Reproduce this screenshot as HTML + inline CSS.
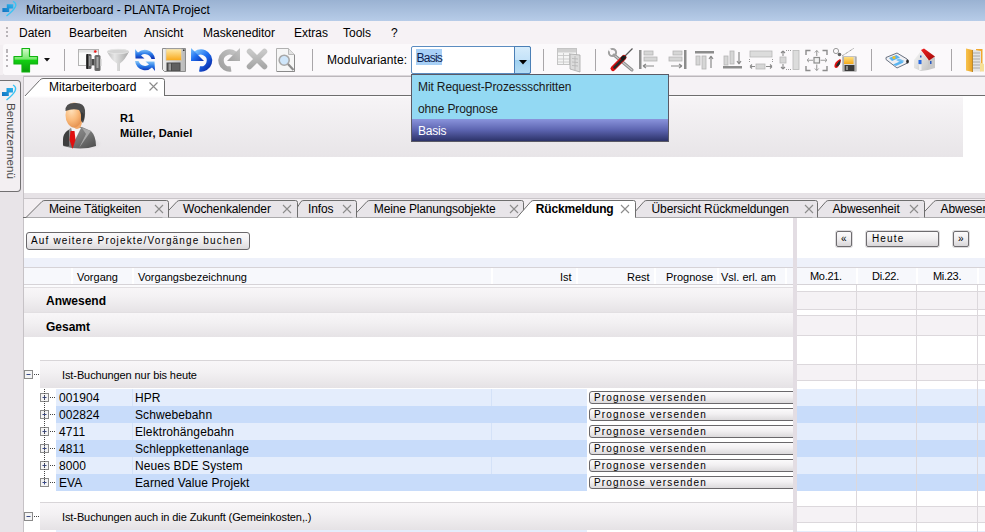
<!DOCTYPE html>
<html><head><meta charset="utf-8">
<style>
*{box-sizing:border-box;margin:0;padding:0}
html,body{width:985px;height:532px;overflow:hidden;background:#f3eff2;font-family:"Liberation Sans",sans-serif;color:#000}
.a{position:absolute}
#title{left:0;top:0;width:985px;height:21px;background:linear-gradient(#9ab2d2,#b7cce8)}
#title .t{left:26px;top:3px;font-size:12px;color:#000;white-space:nowrap}
#menu{left:0;top:21px;width:985px;height:24px;background:#f6f2f5}
#menu span{position:absolute;top:5px;font-size:12px}
#tb{left:0;top:45px;width:985px;height:31px;background:#f4f0f3}
#tbbg{left:3px;top:44px;width:990px;height:32px;background:#fbf9fb;border-radius:3px 0 0 3px;border-bottom:1px solid #dcd8dc}
.sep{position:absolute;width:1px;background:#a9a6a9}
.grip{position:absolute;width:2px;height:2px;background:#b8b4b8}
#strip{left:0;top:75px;width:23px;height:457px;background:#e8e4e8}
#side{left:0px;top:80px;width:21px;height:112px;border:1px solid #727072;border-left:none;border-radius:0 4px 4px 0;background:#f3eff2}
#main{left:23px;top:76px;width:962px;height:456px;background:#f5f2f5;border-left:1px solid #c6c2c6}
.vt{position:absolute;left:4.5px;top:22px;writing-mode:vertical-rl;font-size:11.7px;color:#4a4a4a;white-space:nowrap}
.tl{top:202px;font-size:12px;letter-spacing:-0.15px;white-space:nowrap}
.btn{border:1px solid #6a686b;border-radius:3px;background:linear-gradient(#fbfafb 0%,#f2f0f2 45%,#dcdadc 100%);overflow:hidden}
.btn span,.cbtn span{position:absolute;font-size:10px;letter-spacing:1.15px;white-space:nowrap;color:#000}
.cbtn{box-shadow:0 0 0 1px #dedcde;border:1px solid #6e6c6f;border-radius:2px;background:linear-gradient(#fbfafb 0%,#f0eef0 50%,#d8d6d8 100%)}
.hd{top:271px;font-size:11px;white-space:nowrap;color:#000}
.bd{font-size:12px;font-weight:bold;white-space:nowrap}
.gt{font-size:11px;letter-spacing:-0.1px;white-space:nowrap}
.dt{font-size:12px;letter-spacing:0.1px;white-space:nowrap}
.grow{background:linear-gradient(#e2dfe2 0px,#e2dfe2 1px,#f8f6f8 1px,#f3f1f3 40%,#e6e3e6 100%)}
.grp{border-top:1px solid #d8d5d8;background:linear-gradient(#f8f6f8,#f3f1f3 40%,#e5e2e5)}
.rd{background:#e4edfc}
.rs{background:#c8dcfa}
</style></head><body>
<div id="title" class="a">
 <svg class="a" style="left:0px;top:0px" width="20" height="20" viewBox="0 0 20 20"><defs><linearGradient id="lg" x1="0" y1="1" x2="1" y2="0"><stop offset="0" stop-color="#1070c0"/><stop offset="1" stop-color="#2cb8f0"/></linearGradient></defs><path d="M2.4 8.1H6.8V4.3H13.3V8.5H9.2V12H2.4z" fill="url(#lg)"/><path d="M13 1.3Q21 5 6.5 16" stroke="#3ac4f4" stroke-width="1.4" fill="none"/></svg>
 <div class="a t">Mitarbeiterboard - PLANTA Project</div>
</div>
<div id="menu" class="a">
 <div class="grip" style="left:6px;top:6px"></div><div class="grip" style="left:6px;top:10px"></div><div class="grip" style="left:6px;top:14px"></div>
 <span style="left:19px">Daten</span>
 <span style="left:69px">Bearbeiten</span>
 <span style="left:144px">Ansicht</span>
 <span style="left:203px">Maskeneditor</span>
 <span style="left:294px">Extras</span>
 <span style="left:343px">Tools</span>
 <span style="left:391px">?</span>
</div>
<div id="tbbg" class="a"></div>
<div id="tb" class="a" style="background:transparent">
 <div class="grip" style="left:6px;top:4px"></div><div class="grip" style="left:6px;top:6px"></div><div class="grip" style="left:6px;top:10px"></div><div class="grip" style="left:6px;top:14px"></div><div class="grip" style="left:6px;top:20px"></div>
 <!-- plus -->
 <svg class="a" style="left:13px;top:2px" width="26" height="26" viewBox="0 0 26 26"><defs><linearGradient id="gp" x1="0" y1="0" x2="0" y2="1"><stop offset="0" stop-color="#d8fad0"/><stop offset=".45" stop-color="#74e86a"/><stop offset=".5" stop-color="#12d012"/><stop offset="1" stop-color="#0a9a0a"/></linearGradient></defs><path d="M9 1.5h7.5v8h8v7.5h-8v8h-7.5v-8h-8v-7.5h8z" fill="url(#gp)" stroke="#10b410" stroke-width="1.2" stroke-linejoin="round"/></svg>
 <svg class="a" style="left:44px;top:13px" width="6" height="4" viewBox="0 0 6 4"><path d="M0 0h6l-3 3.5z" fill="#111"/></svg>
 <div class="sep" style="left:64px;top:4px;height:22px"></div>
 <!-- binoculars window -->
 <svg class="a" style="left:77px;top:3px" width="25" height="24" viewBox="0 0 25 24"><rect x="1.5" y="1.5" width="20" height="16" fill="#fbfbfb" stroke="#b4b4b4"/><rect x="2" y="2" width="19" height="2.5" fill="#e4e4e4"/><rect x="16" y="2" width="3" height="3" fill="#d8d8d8"/><circle cx="18.3" cy="3.5" r="1.3" fill="#f01818"/><rect x="9" y="6" width="5.5" height="15" rx="1.5" fill="#5c5c5c"/><rect x="9.5" y="6" width="1.5" height="15" fill="#1e1e1e"/><rect x="12" y="8" width="1.5" height="10" fill="#9a9a9a"/><rect x="17.5" y="7" width="6" height="16" rx="1.5" fill="#6a6a6a"/><rect x="19.5" y="9" width="2" height="11" fill="#a8a8a8"/><rect x="14.5" y="11" width="3" height="6" fill="#4a4a4a"/><rect x="23" y="11" width="1.5" height="7" fill="#c8c8c8"/></svg>
 <!-- funnel -->
 <svg class="a" style="left:106px;top:3px" width="24" height="24" viewBox="0 0 24 24"><defs><linearGradient id="gf" x1="0" x2="1"><stop offset="0" stop-color="#bcbcbc"/><stop offset=".35" stop-color="#e6e6e6"/><stop offset=".7" stop-color="#c4c4c4"/><stop offset="1" stop-color="#a4a4a4"/></linearGradient></defs><path d="M1 3.5Q2 1 12 1Q22 1 23 3.5Q19 12 14 15.5V23H11V15.5Q5 12 1 3.5z" fill="url(#gf)"/><ellipse cx="12" cy="3.5" rx="10.5" ry="2.2" fill="#d4d4d4" stroke="#e8e8e8" stroke-width=".8"/><rect x="11.5" y="15" width="1" height="8" fill="#d8d8d8"/></svg>
 <!-- refresh -->
 <svg class="a" style="left:134px;top:3px" width="22" height="24" viewBox="0 0 22 24"><defs><linearGradient id="gr" x1="0" y1="0" x2="0" y2="1"><stop offset="0" stop-color="#8ccaf8"/><stop offset=".5" stop-color="#2a7ae8"/><stop offset="1" stop-color="#0a2cb0"/></linearGradient></defs><path d="M1 1L1.5 10.5H10.5L7 7.5Q9 5.8 12 6.2Q16 7 17.5 11H21Q20 4 13 2Q7.5 1 4 4.5z" fill="url(#gr)"/><path d="M21 23L20.5 13.5H11.5L15 16.5Q13 18.2 10 17.8Q6 17 4.5 13H1Q2 20 9 22Q14.5 23 18 19.5z" fill="url(#gr)"/></svg>
 <!-- save -->
 <svg class="a" style="left:160px;top:0px" width="28" height="30" viewBox="160 45 28 30"><defs><linearGradient id="gs" x1="0" y1="0" x2="0" y2="1"><stop offset="0" stop-color="#ffeaa8"/><stop offset="1" stop-color="#f8a818"/></linearGradient><linearGradient id="gsf" x1="0" y1="0" x2="1" y2="0"><stop offset="0" stop-color="#f0f0f0"/><stop offset="1" stop-color="#b8b8b8"/></linearGradient></defs><path d="M162.5 48.5H185.5V71.5H164.5L162.5 69.5z" fill="url(#gsf)" stroke="#8c8c8c"/><rect x="166" y="49" width="15.5" height="11.5" fill="url(#gs)" stroke="#c8c8c8" stroke-width=".6"/><rect x="183" y="49.5" width="1.5" height="1.5" fill="#333"/><rect x="166.5" y="62.5" width="14" height="8.5" fill="#4a4a4a"/><rect x="168.5" y="63.5" width="2.5" height="7" fill="#9a9a9a"/><rect x="172" y="63.5" width="7.5" height="7" fill="#606060"/></svg>
 <!-- undo -->
 <svg class="a" style="left:186px;top:0px" width="30" height="30" viewBox="186 45 30 30"><defs><linearGradient id="gu" x1="0" y1="0" x2="1" y2="1"><stop offset="0" stop-color="#7cc4fc"/><stop offset=".5" stop-color="#1e6ef0"/><stop offset="1" stop-color="#0a2aa8"/></linearGradient></defs><path d="M193.6 56.25A8.5 8.5 0 1 1 199.5 68.9" stroke="url(#gu)" stroke-width="5.5" fill="none"/><path d="M191 48L191 61H204z" fill="url(#gu)"/></svg>
 <!-- redo -->
 <svg class="a" style="left:214px;top:0px" width="30" height="30" viewBox="214 45 30 30"><defs><linearGradient id="gd" x1="1" y1="0" x2="0" y2="1"><stop offset="0" stop-color="#c4c4c4"/><stop offset="1" stop-color="#a0a0a0"/></linearGradient></defs><path d="M236.9 56.25A8.5 8.5 0 1 0 231 68.9" stroke="url(#gd)" stroke-width="5.5" fill="none"/><path d="M240 48L240 61H227z" fill="url(#gd)"/></svg>
 <!-- x -->
 <svg class="a" style="left:244px;top:0px" width="26" height="30" viewBox="244 45 26 30"><defs><linearGradient id="gx" x1="0" y1="0" x2="0" y2="1"><stop offset="0" stop-color="#c8c8c8"/><stop offset="1" stop-color="#a8a8a8"/></linearGradient></defs><path d="M249.5 51.5L264.5 66.5M264.5 51.5L249.5 66.5" stroke="url(#gx)" stroke-width="5.5" stroke-linecap="round"/></svg>
 <!-- preview -->
 <svg class="a" style="left:275px;top:0px" width="22" height="30" viewBox="275 45 22 30"><path d="M276.5 48.5H288.5L294.5 54.5V71.5H276.5z" fill="#f6f6f6" stroke="#b0b0b0"/><path d="M288.5 48.5V54.5H294.5" fill="#e2e2e2" stroke="#b8b8b8"/><path d="M294.5 55V71.5H277" stroke="#8a8a8a" stroke-width="1" fill="none"/><path d="M287.5 63.5L293.5 70" stroke="#8c8c8c" stroke-width="2.2"/><circle cx="284.2" cy="60.2" r="5" fill="#cfe6fa" stroke="#a8a8a8" stroke-width="1.6"/></svg>
 <div class="sep" style="left:312px;top:4px;height:22px"></div>
 <span class="a" style="left:327px;top:8px;font-size:12px;letter-spacing:0.1px">Modulvariante:</span>
 <div class="a" style="left:411px;top:1px;width:120px;height:28px;border:1px solid #5b8cc0;border-radius:2px;background:#fff"></div>
 <div class="a" style="left:416px;top:4px;width:26px;height:16px;background:#a8d0f6"></div>
 <span class="a" style="left:416.5px;top:6px;font-size:12px;letter-spacing:-0.75px;color:#0c1e50">Basis</span>
 <div class="a" style="left:514px;top:1px;width:17px;height:28px;border:1px solid #4a7fb6;border-radius:0 2px 2px 0;background:linear-gradient(#d6ecfb 0%,#c4e2f8 50%,#9fd0f0 51%,#b4dcf4 100%)"></div>
 <svg class="a" style="left:519px;top:15px" width="8" height="5" viewBox="0 0 8 5"><path d="M0 0h8l-4 4.5z" fill="#000"/></svg>
 <div class="sep" style="left:543px;top:4px;height:22px"></div>
 <!-- grid doc -->
 <svg class="a" style="left:552px;top:0px" width="32" height="30" viewBox="552 45 32 30"><rect x="557.5" y="48.5" width="19" height="16" fill="#f4f4f4" stroke="#c4c4c4"/><rect x="558" y="49" width="18" height="3.5" fill="#d0d0d0"/><path d="M558 55.5H576M558 59H576M558 62H576M563.5 53V64M569.5 53V64" stroke="#c8c8c8" stroke-width=".9"/><path d="M570 54L580 55V72L570 69z" fill="#dcdcdc" stroke="#a8a8a8" stroke-width=".8"/><path d="M572 58.5L578 59M572 62L578 62.5M572 65.5L578 66M575 56V70" stroke="#b4b4b4" stroke-width=".8"/></svg>
 <div class="sep" style="left:595px;top:4px;height:22px"></div>
 <!-- tools -->
 <svg class="a" style="left:606px;top:0px" width="30" height="30" viewBox="606 45 30 30"><path d="M614 55L632 70" stroke="#8a8a8a" stroke-width="3" stroke-linecap="round"/><path d="M614 55L632 70" stroke="#c8c8c8" stroke-width="1.2" stroke-linecap="round"/><circle cx="612.5" cy="52.5" r="3.6" fill="none" stroke="#a0a0a0" stroke-width="2"/><path d="M609 49L612 52.5" stroke="#f8f6f8" stroke-width="2.5"/><path d="M632.5 48.5L623 58" stroke="#5a5a5a" stroke-width="1.3"/><path d="M624 57.5L613 68.5" stroke="#d81010" stroke-width="5" stroke-linecap="round"/><path d="M625 57L614.5 67.5" stroke="#2a2a2a" stroke-width="2.6" stroke-linecap="round"/><rect x="621" y="56" width="4" height="4" transform="rotate(45 623 58)" fill="#1a1a1a"/></svg>
 <!-- align left -->
 <svg class="a" style="left:639px;top:5px" width="20" height="20" viewBox="0 0 20 20"><rect x="0" y="0" width="2.5" height="19" fill="#8c8c8c"/><rect x="5" y="1" width="9" height="4" fill="#d6d6d6" stroke="#b4b4b4" stroke-width=".8"/><rect x="5" y="7" width="13" height="4" fill="#d6d6d6" stroke="#b4b4b4" stroke-width=".8"/><path d="M4 16H15M4 16L7 14M4 16L7 18" stroke="#8a8a8a" stroke-width="1.2" fill="none"/></svg>
 <!-- align right -->
 <svg class="a" style="left:667px;top:5px" width="20" height="20" viewBox="0 0 20 20"><rect x="17" y="0" width="2.5" height="19" fill="#8c8c8c"/><rect x="6" y="1" width="9" height="4" fill="#d6d6d6" stroke="#b4b4b4" stroke-width=".8"/><rect x="2" y="7" width="13" height="4" fill="#d6d6d6" stroke="#b4b4b4" stroke-width=".8"/><path d="M4 16H15M15 16L12 14M15 16L12 18" stroke="#8a8a8a" stroke-width="1.2" fill="none"/></svg>
 <!-- align top -->
 <svg class="a" style="left:695px;top:5px" width="20" height="20" viewBox="0 0 20 20"><rect x="0" y="1" width="19" height="2.5" fill="#8c8c8c"/><rect x="1" y="6" width="4" height="9" fill="#d6d6d6" stroke="#b4b4b4" stroke-width=".8"/><rect x="7" y="6" width="4" height="13" fill="#d6d6d6" stroke="#b4b4b4" stroke-width=".8"/><path d="M16 18V6M16 6L14 9M16 6L18 9" stroke="#8a8a8a" stroke-width="1.2" fill="none"/></svg>
 <!-- align bottom -->
 <svg class="a" style="left:723px;top:5px" width="20" height="20" viewBox="0 0 20 20"><rect x="0" y="16" width="19" height="2.5" fill="#8c8c8c"/><rect x="1" y="6" width="4" height="9" fill="#d6d6d6" stroke="#b4b4b4" stroke-width=".8"/><rect x="7" y="1" width="4" height="13" fill="#d6d6d6" stroke="#b4b4b4" stroke-width=".8"/><path d="M16 2V14M16 14L14 11M16 14L18 11" stroke="#8a8a8a" stroke-width="1.2" fill="none"/></svg>
 <!-- same width -->
 <svg class="a" style="left:749px;top:5px" width="25" height="20" viewBox="0 0 25 20"><rect x="1" y="1" width="22" height="6" fill="#dcdcdc" stroke="#b8b8b8" stroke-width=".8"/><path d="M0.5 9V13M23.5 9V13" stroke="#9a9a9a" stroke-dasharray="1 1"/><rect x="7" y="14" width="9" height="5" fill="#d6d6d6" stroke="#b8b8b8" stroke-width=".8"/><path d="M1 16.5H6M17 16.5H23M1 16.5L3 14.5M1 16.5L3 18.5M23 16.5L21 14.5M23 16.5L21 18.5" stroke="#8a8a8a" stroke-width="1.1" fill="none"/></svg>
 <!-- same height -->
 <svg class="a" style="left:779px;top:5px" width="21" height="20" viewBox="0 0 21 20"><rect x="14" y="0.5" width="6" height="19" fill="#dcdcdc" stroke="#b8b8b8" stroke-width=".8"/><rect x="1" y="7" width="6" height="6" fill="#d6d6d6" stroke="#b8b8b8" stroke-width=".8"/><path d="M4 1V6M4 14V19M4 1L2 3M4 1L6 3M4 19L2 17M4 19L6 17" stroke="#8a8a8a" stroke-width="1.1" fill="none"/><path d="M7 0.5H12M7 19.5H12" stroke="#9a9a9a" stroke-dasharray="1 1"/></svg>
 <!-- center -->
 <svg class="a" style="left:805px;top:4px" width="25" height="24" viewBox="0 0 25 24"><path d="M1 6V1.5H5.5M17.5 1.5H22V6M1 17V21.5H5.5M17.5 21.5H22V17" stroke="#8c8c8c" stroke-width="1.4" fill="none"/><rect x="9" y="8.5" width="5.5" height="5.5" fill="#f0f0f0" stroke="#8c8c8c" stroke-width="1.2"/><path d="M11.75 1.5V7M11.75 15.5V21.5M2 11.25H8M15.5 11.25H22" stroke="#9a9a9a" stroke-width="1.1"/><path d="M9.8 3.5L11.75 1.5L13.7 3.5M9.8 19.5L11.75 21.5L13.7 19.5M4 9.3L2 11.25L4 13.2M20 9.3L22 11.25L20 13.2" stroke="#9a9a9a" stroke-width="1" fill="none"/></svg>
 <!-- save paint -->
 <svg class="a" style="left:830px;top:0px" width="30" height="30" viewBox="830 45 30 30"><circle cx="836" cy="51" r="2.6" fill="none" stroke="#9a9a9a" stroke-width="1"/><circle cx="839.5" cy="54.5" r="1.8" fill="#606060"/><path d="M842 56L853.5 48.5" stroke="#8a8a8a" stroke-width="1" stroke-dasharray="1 .6"/><path d="M840 59Q834 62 834.5 67Q836 69 838 67Q841 63 841 60z" fill="#e01010"/><path d="M840.5 60Q836.5 63 836 66.5Q838 67 840 64z" fill="#1e2a2a"/><rect x="842.5" y="56.5" width="14" height="15" fill="#8c8c8c"/><rect x="843.5" y="57" width="12" height="14" fill="#d4d4d4"/><defs><linearGradient id="gsp" x1="0" y1="0" x2="0" y2="1"><stop offset="0" stop-color="#ffe080"/><stop offset="1" stop-color="#f4a818"/></linearGradient></defs><rect x="844" y="57" width="9.5" height="7" fill="url(#gsp)"/><rect x="844.5" y="65" width="10" height="6" fill="#3a3a3a"/><rect x="846" y="66" width="2" height="4" fill="#8a8a8a"/></svg>
 <div class="sep" style="left:871px;top:4px;height:22px"></div>
 <!-- map -->
 <svg class="a" style="left:882px;top:0px" width="30" height="30" viewBox="882 45 30 30"><path d="M886 57.5L897 53L907 59Q909 61 907.5 63L897 68L886 59.5z" fill="#f0f0f4" stroke="#5a6474" stroke-width=".9" stroke-linejoin="round"/><path d="M889 58L896.5 55L900 57.5L892 61z" fill="#5ab4f0"/><path d="M899 58.5L904.5 61L901 62.8L896 60z" fill="#78c0f0"/><path d="M893 64.5L901 61L903.5 62.5L896 66z" fill="#5ab4f0"/><circle cx="894" cy="57.5" r="1.6" fill="#f4c020"/><ellipse cx="907.5" cy="61.5" rx="1.3" ry="2" fill="#2a2a2a"/></svg>
 <!-- house -->
 <svg class="a" style="left:912px;top:0px" width="26" height="30" viewBox="912 45 26 30"><defs><linearGradient id="gh" x1="0" y1="0" x2="1" y2="1"><stop offset="0" stop-color="#f8f8f8"/><stop offset="1" stop-color="#c4c4c4"/></linearGradient><linearGradient id="groof" x1="0" y1="0" x2="1" y2="1"><stop offset="0" stop-color="#f02020"/><stop offset="1" stop-color="#a00808"/></linearGradient></defs><path d="M914 60L921 51L928 60V70L921 71L914 68z" fill="url(#gh)"/><path d="M928 60L935 57V68L928 70z" fill="#c8c8c8"/><path d="M921 50L924 48.5L935 56.5L929 60.5z" fill="url(#groof)"/><rect x="918.5" y="60" width="3" height="4" fill="#2a6ae0"/><rect x="919" y="65" width="2.5" height="5" fill="#f0f0f0"/><rect x="920" y="55.5" width="1.5" height="2" fill="#2a5ac0"/><rect x="930" y="61" width="1.5" height="3" fill="#2a5ac0"/></svg>
 <div class="sep" style="left:951px;top:4px;height:22px"></div>
 <!-- folder -->
 <svg class="a" style="left:960px;top:0px" width="25" height="30" viewBox="960 45 25 30"><path d="M976 49H982.5V71H976z" fill="#f0a830"/><path d="M972 49.5L981 51V71.5H972z" fill="#e4e4e4"/><path d="M973 53H980M973 56H980M973 59H980M973 62H980M973 65H980M973 68H980" stroke="#a4a4a4" stroke-width=".9"/><path d="M980 62.5L984 64V71.5H980z" fill="#f6e098"/><defs><linearGradient id="gfo" x1="0" y1="0" x2="1" y2="0"><stop offset="0" stop-color="#f8c450"/><stop offset="1" stop-color="#e8a020"/></linearGradient></defs><path d="M966 48.5L972.5 50V72L966 70.5z" fill="url(#gfo)"/><path d="M972.5 50V72" stroke="#b07818" stroke-width=".8"/></svg>
</div>
<div id="strip" class="a"></div>
<div id="side" class="a">
 <svg class="a" style="left:0px;top:2px" width="20" height="20" viewBox="0 0 20 20"><defs><linearGradient id="lg2" x1="0" y1="1" x2="1" y2="0"><stop offset="0" stop-color="#1070c0"/><stop offset="1" stop-color="#2cb8f0"/></linearGradient></defs><path d="M2 9H6.5V5H13V9.5H8.8V13H2z" fill="url(#lg2)"/><path d="M13 2Q20.5 6 6.5 17" stroke="#3ac4f4" stroke-width="1.4" fill="none"/></svg>
 <div class="vt">Benutzermenü</div>
</div>
<div id="main" class="a">
 <div class="a" style="left:0;top:0;width:962px;height:1px;background:#bcb8bc"></div>
 <!-- top doc tab -->
 <svg class="a" style="left:0px;top:1px" width="143" height="20" viewBox="0 0 143 20"><path d="M0.5 19.5L15.5 3.5Q17 1.5 19 1.5H138Q140.5 1.5 140.5 3.5V19.5" fill="#fff" stroke="#6e6e6e" stroke-width="1"/></svg>
 <div class="a" style="left:140px;top:19px;width:822px;height:1px;background:#6e6e6e"></div>
 <span class="a" style="left:25px;top:4px;font-size:12px">Mitarbeiterboard</span>
 <svg class="a" style="left:125px;top:6px" width="9" height="9" viewBox="0 0 9 9"><path d="M0.5 0.5L8.5 8.5M8.5 0.5L0.5 8.5" stroke="#8a8a8a" stroke-width="1.1"/></svg>
 <div class="a" style="left:0;top:20px;width:939px;height:61px;background:linear-gradient(#fdfcfd 0px,#fdfcfd 1px,#f6f4f6 2px,#e8e5e8 100%)"></div>
 <div class="a" style="left:939px;top:20px;width:23px;height:97px;background:#fff"></div>
 <div class="a" style="left:0;top:81px;width:962px;height:36px;background:#fff"></div>
 <!-- person -->
 <svg class="a" style="left:32px;top:24px" width="50" height="52" viewBox="55 100 50 52"><defs><radialGradient id="face" cx=".35" cy=".3" r=".8"><stop offset="0" stop-color="#ffe2bc"/><stop offset=".55" stop-color="#f9b878"/><stop offset="1" stop-color="#e08a48"/></radialGradient><linearGradient id="suit" x1="0" y1="0" x2="1" y2="1"><stop offset="0" stop-color="#9a9a9a"/><stop offset=".5" stop-color="#7a7a7a"/><stop offset="1" stop-color="#4a4a4a"/></linearGradient><radialGradient id="shd" cx=".5" cy=".5" r=".5"><stop offset="0" stop-color="#bdb9bd"/><stop offset="1" stop-color="#e8e5e8" stop-opacity="0"/></radialGradient></defs>
 <ellipse cx="88" cy="144" rx="14" ry="6" fill="url(#shd)"/>
 <path d="M62 146Q61 136 66 131L71 127H81L90 131Q95 136 95 146Q80 151 62 146z" fill="url(#suit)"/>
 <path d="M62 140Q62 134 66 131L68 130L68 146Q64 147 62 145z" fill="#3e3e3e"/>
 <path d="M70 127L73 142L80 128z" fill="#f6f6f6"/>
 <path d="M81 128L85 134L78 148L90 131z" fill="#a8a8a8"/>
 <path d="M69.5 131H73.5L74.5 140L71.5 149L68.5 140z" fill="#e01010"/>
 <path d="M71 121Q72 129 76 129Q81 128 81 121z" fill="#f2a868"/>
 <ellipse cx="73" cy="115" rx="8.5" ry="12.5" fill="url(#face)"/>
 <path d="M64.5 111Q64 103 73 103Q83 102 84 110Q84.5 118 82 123L80 121Q81 114 78 110Q72 108 64.5 111z" fill="#4e4e4e"/>
 <path d="M80 112Q84 113 83 119Q82 121 80 120z" fill="#3a3a3a"/>
 </svg>
 <span class="a" style="left:96px;top:36px;font-size:11px;font-weight:bold;letter-spacing:0.1px">R1</span>
 <span class="a" style="left:96px;top:51px;font-size:11px;font-weight:bold;letter-spacing:0.1px">Müller, Daniel</span>
 <!-- gray band -->
 <div class="a" style="left:0;top:117px;width:962px;height:5px;background:#e6e2e6"></div>
 <div class="a" style="left:0;top:122px;width:962px;height:1px;background:#c9c5c9"></div>
 <div class="a" style="left:0;top:123px;width:962px;height:18px;background:#f3eff2"></div>
 <div class="a" style="left:0;top:141px;width:962px;height:315px;background:#fff"></div>
</div>
<div id="content">
<svg class="a" style="left:23px;top:199px" width="962" height="20" viewBox="0 0 962 20">
<path d="M0 18.5H962" stroke="#6e6e6e" stroke-width="1"/>
<path d="M896 18.5L911 2.5Q912 1.5 914 1.5H1074.5Q1076.5 1.5 1076.5 3.5V18.5" fill="#e8e5e9" stroke="#6e6e6e" stroke-width="1"/>
<path d="M789 18.5L803 2.5Q804 1.5 806 1.5H899.5Q901.5 1.5 901.5 3.5V18.5" fill="#e8e5e9" stroke="#6e6e6e" stroke-width="1"/>
<path d="M607 18.5L621 2.5Q622 1.5 624 1.5H792.5Q794.5 1.5 794.5 3.5V18.5" fill="#e8e5e9" stroke="#6e6e6e" stroke-width="1"/>
<path d="M329 18.5L344 2.5Q345 1.5 347 1.5H498.5Q500.5 1.5 500.5 3.5V18.5" fill="#e8e5e9" stroke="#6e6e6e" stroke-width="1"/>
<path d="M268 18.5L278 2.5Q279 1.5 281 1.5H331.5Q333.5 1.5 333.5 3.5V18.5" fill="#e8e5e9" stroke="#6e6e6e" stroke-width="1"/>
<path d="M139 18.5L154 2.5Q155 1.5 157 1.5H272.5Q274.5 1.5 274.5 3.5V18.5" fill="#e8e5e9" stroke="#6e6e6e" stroke-width="1"/>
<path d="M3 18.5L19 2.5Q20 1.5 22 1.5H143.5Q145.5 1.5 145.5 3.5V18.5" fill="#e8e5e9" stroke="#6e6e6e" stroke-width="1"/>
<path d="M494 18.5L508 2.5Q509 1.5 511 1.5H610.5Q612.5 1.5 612.5 3.5V18.5" fill="#ffffff" stroke="#6e6e6e" stroke-width="1"/>
<rect x="495" y="18" width="117" height="2" fill="#fff"/>
</svg>
<span class="a tl" style="left:49px;">Meine Tätigkeiten</span>
<svg class="a" style="left:154px;top:204px" width="10" height="10" viewBox="0 0 10 10"><path d="M1 1L9 9M9 1L1 9" stroke="#8c8c8c" stroke-width="1.1"/></svg>
<span class="a tl" style="left:183px;">Wochenkalender</span>
<svg class="a" style="left:282px;top:204px" width="10" height="10" viewBox="0 0 10 10"><path d="M1 1L9 9M9 1L1 9" stroke="#8c8c8c" stroke-width="1.1"/></svg>
<span class="a tl" style="left:308px;">Infos</span>
<svg class="a" style="left:341.5px;top:204px" width="10" height="10" viewBox="0 0 10 10"><path d="M1 1L9 9M9 1L1 9" stroke="#8c8c8c" stroke-width="1.1"/></svg>
<span class="a tl" style="left:373.8px;">Meine Planungsobjekte</span>
<svg class="a" style="left:509px;top:204px" width="10" height="10" viewBox="0 0 10 10"><path d="M1 1L9 9M9 1L1 9" stroke="#8c8c8c" stroke-width="1.1"/></svg>
<span class="a tl" style="left:535.8px;font-weight:bold;">Rückmeldung</span>
<svg class="a" style="left:620px;top:204px" width="10" height="10" viewBox="0 0 10 10"><path d="M1 1L9 9M9 1L1 9" stroke="#8c8c8c" stroke-width="1.1"/></svg>
<span class="a tl" style="left:651.6px;">Übersicht Rückmeldungen</span>
<svg class="a" style="left:804px;top:204px" width="10" height="10" viewBox="0 0 10 10"><path d="M1 1L9 9M9 1L1 9" stroke="#8c8c8c" stroke-width="1.1"/></svg>
<span class="a tl" style="left:832.5px;">Abwesenheit</span>
<svg class="a" style="left:909px;top:204px" width="10" height="10" viewBox="0 0 10 10"><path d="M1 1L9 9M9 1L1 9" stroke="#8c8c8c" stroke-width="1.1"/></svg>
<span class="a tl" style="left:940.6px;">Abwesenheit</span>
<div class="a btn" style="left:26px;top:232px;width:224px;height:18px"><span style="left:4px;top:2px">Auf weitere Projekte/Vorgänge buchen</span></div>
<div class="a" style="left:24px;top:258px;width:769px;height:9px;background:#eef1fa"></div>
<div class="a" style="left:24px;top:267px;width:769px;height:1px;background:#d6d3d7"></div>
<div class="a" style="left:24px;top:268px;width:769px;height:16px;background:#f7f8fc"></div>
<div class="a" style="left:71px;top:268px;width:2px;height:16px;background:#fff"></div>
<div class="a" style="left:132px;top:268px;width:2px;height:16px;background:#fff"></div>
<div class="a" style="left:491px;top:268px;width:2px;height:16px;background:#fff"></div>
<div class="a" style="left:576px;top:268px;width:2px;height:16px;background:#fff"></div>
<div class="a" style="left:654px;top:268px;width:2px;height:16px;background:#fff"></div>
<div class="a" style="left:717px;top:268px;width:2px;height:16px;background:#fff"></div>
<div class="a" style="left:785px;top:268px;width:2px;height:16px;background:#fff"></div>
<div class="a" style="left:24px;top:284px;width:769px;height:1px;background:#d6d3d7"></div>
<div class="a" style="left:24px;top:285px;width:769px;height:2px;background:#fbfbfd"></div>
<span class="a hd" style="left:77px">Vorgang</span>
<span class="a hd" style="left:138px">Vorgangsbezeichnung</span>
<span class="a hd" style="left:560px">Ist</span>
<span class="a hd" style="left:627px">Rest</span>
<span class="a hd" style="left:666px">Prognose</span>
<span class="a hd" style="left:721px">Vsl. erl. am</span>
<div class="a grow" style="left:24px;top:287px;width:769px;height:25px"></div>
<div class="a grow" style="left:24px;top:312px;width:769px;height:25px"></div>
<span class="a bd" style="left:46px;top:294px">Anwesend</span>
<span class="a bd" style="left:46px;top:320px">Gesamt</span>
<div class="a grp" style="left:40px;top:360px;width:753px;height:28px"></div>
<span class="a gt" style="left:62px;top:369px">Ist-Buchungen nur bis heute</span>
<svg class="a" style="left:24px;top:370px" width="16" height="10" viewBox="0 0 16 10"><rect x="0.5" y="0.5" width="8" height="8" fill="#f4f4f4" stroke="#8a8a8a"/><path d="M2.5 4.5H6.5" stroke="#3a4a8a"/><path d="M10 4.5H16" stroke="#444" stroke-dasharray="1 1"/></svg>
<div class="a rd" style="left:56px;top:389px;width:531px;height:17px"></div>
<div class="a" style="left:132px;top:389px;width:1px;height:17px;background:#d4e2f8"></div>
<div class="a" style="left:491px;top:389px;width:1px;height:17px;background:#d4e2f8"></div>
<span class="a dt" style="left:59px;top:391px">001904</span>
<span class="a dt" style="left:135px;top:391px">HPR</span>
<div class="a btn" style="left:589px;top:391px;width:210px;height:13px"><span style="left:4px;top:0px">Prognose versenden</span></div>
<svg class="a" style="left:40px;top:393px" width="16" height="10" viewBox="0 0 16 10"><rect x="0.5" y="0.5" width="8" height="8" fill="#f4f4f4" stroke="#8a8a8a"/><path d="M2.5 4.5H6.5M4.5 2.5V6.5" stroke="#3a4a8a"/><path d="M10 4.5H16" stroke="#444" stroke-dasharray="1 1"/></svg>
<div class="a rs" style="left:56px;top:406px;width:531px;height:17px"></div>
<span class="a dt" style="left:59px;top:408px">002824</span>
<span class="a dt" style="left:135px;top:408px">Schwebebahn</span>
<div class="a btn" style="left:589px;top:408px;width:210px;height:13px"><span style="left:4px;top:0px">Prognose versenden</span></div>
<svg class="a" style="left:40px;top:410px" width="16" height="10" viewBox="0 0 16 10"><rect x="0.5" y="0.5" width="8" height="8" fill="#f4f4f4" stroke="#8a8a8a"/><path d="M2.5 4.5H6.5M4.5 2.5V6.5" stroke="#3a4a8a"/><path d="M10 4.5H16" stroke="#444" stroke-dasharray="1 1"/></svg>
<div class="a rd" style="left:56px;top:423px;width:531px;height:17px"></div>
<div class="a" style="left:132px;top:423px;width:1px;height:17px;background:#d4e2f8"></div>
<div class="a" style="left:491px;top:423px;width:1px;height:17px;background:#d4e2f8"></div>
<span class="a dt" style="left:59px;top:425px">4711</span>
<span class="a dt" style="left:135px;top:425px">Elektrohängebahn</span>
<div class="a btn" style="left:589px;top:425px;width:210px;height:13px"><span style="left:4px;top:0px">Prognose versenden</span></div>
<svg class="a" style="left:40px;top:427px" width="16" height="10" viewBox="0 0 16 10"><rect x="0.5" y="0.5" width="8" height="8" fill="#f4f4f4" stroke="#8a8a8a"/><path d="M2.5 4.5H6.5M4.5 2.5V6.5" stroke="#3a4a8a"/><path d="M10 4.5H16" stroke="#444" stroke-dasharray="1 1"/></svg>
<div class="a rs" style="left:56px;top:440px;width:531px;height:17px"></div>
<span class="a dt" style="left:59px;top:442px">4811</span>
<span class="a dt" style="left:135px;top:442px">Schleppkettenanlage</span>
<div class="a btn" style="left:589px;top:442px;width:210px;height:13px"><span style="left:4px;top:0px">Prognose versenden</span></div>
<svg class="a" style="left:40px;top:444px" width="16" height="10" viewBox="0 0 16 10"><rect x="0.5" y="0.5" width="8" height="8" fill="#f4f4f4" stroke="#8a8a8a"/><path d="M2.5 4.5H6.5M4.5 2.5V6.5" stroke="#3a4a8a"/><path d="M10 4.5H16" stroke="#444" stroke-dasharray="1 1"/></svg>
<div class="a rd" style="left:56px;top:457px;width:531px;height:17px"></div>
<div class="a" style="left:132px;top:457px;width:1px;height:17px;background:#d4e2f8"></div>
<div class="a" style="left:491px;top:457px;width:1px;height:17px;background:#d4e2f8"></div>
<span class="a dt" style="left:59px;top:459px">8000</span>
<span class="a dt" style="left:135px;top:459px">Neues BDE System</span>
<div class="a btn" style="left:589px;top:459px;width:210px;height:13px"><span style="left:4px;top:0px">Prognose versenden</span></div>
<svg class="a" style="left:40px;top:461px" width="16" height="10" viewBox="0 0 16 10"><rect x="0.5" y="0.5" width="8" height="8" fill="#f4f4f4" stroke="#8a8a8a"/><path d="M2.5 4.5H6.5M4.5 2.5V6.5" stroke="#3a4a8a"/><path d="M10 4.5H16" stroke="#444" stroke-dasharray="1 1"/></svg>
<div class="a rs" style="left:56px;top:474px;width:531px;height:17px"></div>
<span class="a dt" style="left:59px;top:476px">EVA</span>
<span class="a dt" style="left:135px;top:476px">Earned Value Projekt</span>
<div class="a btn" style="left:589px;top:476px;width:210px;height:13px"><span style="left:4px;top:0px">Prognose versenden</span></div>
<svg class="a" style="left:40px;top:478px" width="16" height="10" viewBox="0 0 16 10"><rect x="0.5" y="0.5" width="8" height="8" fill="#f4f4f4" stroke="#8a8a8a"/><path d="M2.5 4.5H6.5M4.5 2.5V6.5" stroke="#3a4a8a"/><path d="M10 4.5H16" stroke="#444" stroke-dasharray="1 1"/></svg>
<svg class="a" style="left:44px;top:389px" width="1" height="94" viewBox="0 0 1 94"><path d="M0.5 0V94" stroke="#444" stroke-dasharray="1 1"/></svg>
<div class="a grp" style="left:40px;top:502px;width:753px;height:28px"></div>
<span class="a gt" style="left:62px;top:511px">Ist-Buchungen auch in die Zukunft (Gemeinkosten,.)</span>
<svg class="a" style="left:24px;top:512px" width="16" height="10" viewBox="0 0 16 10"><rect x="0.5" y="0.5" width="8" height="8" fill="#f4f4f4" stroke="#8a8a8a"/><path d="M2.5 4.5H6.5" stroke="#3a4a8a"/><path d="M10 4.5H16" stroke="#444" stroke-dasharray="1 1"/></svg>
<div class="a rd" style="left:56px;top:530px;width:531px;height:2px"></div>
<div class="a" style="left:793px;top:218px;width:4px;height:314px;background:#e3dde3"></div>
<div class="a cbtn" style="left:836px;top:231px;width:16px;height:16px"><span style="left:4px;top:1px">«</span></div>
<div class="a cbtn" style="left:866px;top:231px;width:73px;height:16px"><span style="left:5px;top:1px">Heute</span></div>
<div class="a cbtn" style="left:953px;top:231px;width:16px;height:16px"><span style="left:4px;top:1px">»</span></div>
<div class="a" style="left:797px;top:258px;width:188px;height:9px;background:#eef1fa"></div>
<div class="a" style="left:797px;top:267px;width:188px;height:1px;background:#d6d3d7"></div>
<div class="a" style="left:797px;top:268px;width:188px;height:16px;background:#f7f8fc"></div>
<div class="a" style="left:797px;top:284px;width:188px;height:1px;background:#d6d3d7"></div>
<span class="a hd" style="left:810px;letter-spacing:-0.3px;top:270px">Mo.21.</span>
<span class="a hd" style="left:872px;letter-spacing:-0.3px;top:270px">Di.22.</span>
<span class="a hd" style="left:933px;letter-spacing:-0.3px;top:270px">Mi.23.</span>
<div class="a" style="left:797px;top:285px;width:188px;height:6px;background:#fff"></div>
<div class="a" style="left:797px;top:291px;width:188px;height:18px;background:#f5f2f5"></div>
<div class="a" style="left:797px;top:309px;width:188px;height:6px;background:#fff"></div>
<div class="a" style="left:797px;top:315px;width:188px;height:20px;background:#f5f2f5"></div>
<div class="a" style="left:797px;top:335px;width:188px;height:29px;background:#fff"></div>
<div class="a" style="left:797px;top:364px;width:188px;height:16px;background:#f5f2f5"></div>
<div class="a" style="left:797px;top:380px;width:188px;height:9px;background:#fff"></div>
<div class="a rd" style="left:797px;top:389px;width:188px;height:17px"></div>
<div class="a rs" style="left:797px;top:406px;width:188px;height:17px"></div>
<div class="a rd" style="left:797px;top:423px;width:188px;height:17px"></div>
<div class="a rs" style="left:797px;top:440px;width:188px;height:17px"></div>
<div class="a rd" style="left:797px;top:457px;width:188px;height:17px"></div>
<div class="a rs" style="left:797px;top:474px;width:188px;height:17px"></div>
<div class="a" style="left:797px;top:491px;width:188px;height:15px;background:#fff"></div>
<div class="a" style="left:797px;top:506px;width:188px;height:16px;background:#f5f2f5"></div>
<div class="a" style="left:797px;top:522px;width:188px;height:9px;background:#fff"></div>
<div class="a rd" style="left:797px;top:531px;width:188px;height:1px"></div>
<div class="a" style="left:797px;top:291px;width:188px;height:1px;background:#dcd8dc"></div>
<div class="a" style="left:797px;top:309px;width:188px;height:1px;background:#dcd8dc"></div>
<div class="a" style="left:797px;top:315px;width:188px;height:1px;background:#dcd8dc"></div>
<div class="a" style="left:797px;top:335px;width:188px;height:1px;background:#dcd8dc"></div>
<div class="a" style="left:797px;top:364px;width:188px;height:1px;background:#dcd8dc"></div>
<div class="a" style="left:797px;top:380px;width:188px;height:1px;background:#dcd8dc"></div>
<div class="a" style="left:797px;top:506px;width:188px;height:1px;background:#dcd8dc"></div>
<div class="a" style="left:797px;top:522px;width:188px;height:1px;background:#dcd8dc"></div>
<div class="a" style="left:856px;top:285px;width:1px;height:247px;background:#dcd8dc"></div>
<div class="a" style="left:856px;top:268px;width:2px;height:16px;background:#fff"></div>
<div class="a" style="left:916px;top:285px;width:1px;height:247px;background:#dcd8dc"></div>
<div class="a" style="left:916px;top:268px;width:2px;height:16px;background:#fff"></div>
<div class="a" style="left:977px;top:285px;width:1px;height:247px;background:#dcd8dc"></div>
<div class="a" style="left:977px;top:268px;width:2px;height:16px;background:#fff"></div>
</div>
<div class="a" style="left:411px;top:74px;width:258px;height:68px;border:1px solid #5a5a66;background:#93d9f3">
 <span class="a" style="left:6px;top:5px;font-size:12px;letter-spacing:-0.12px;color:#1a1a1a;white-space:nowrap">Mit Request-Prozessschritten</span>
 <span class="a" style="left:6px;top:27px;font-size:12px;letter-spacing:-0.12px;color:#1a1a1a;white-space:nowrap">ohne Prognose</span>
 <div class="a" style="left:0;top:44px;width:256px;height:22px;background:linear-gradient(#8a94dc,#5c64b0 50%,#2c3268)"></div>
 <span class="a" style="left:6px;top:49px;font-size:12px;letter-spacing:-0.2px;color:#fff;white-space:nowrap">Basis</span>
</div>
</body></html>
